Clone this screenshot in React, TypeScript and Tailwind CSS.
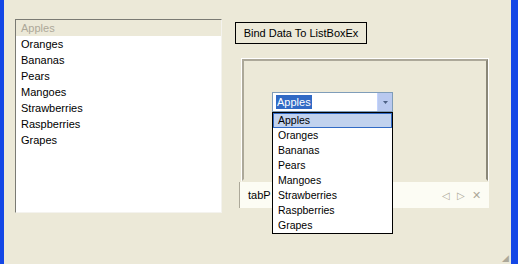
const fruits = [
  "Apples",
  "Oranges",
  "Bananas",
  "Pears",
  "Mangoes",
  "Strawberries",
  "Raspberries",
  "Grapes",
];

const App = () => {
  return (
    <div
      className="relative w-[518px] h-[264px] flex bg-[#ECE9D8] border-l-4 border-l-blue-700 border-r-[7px] border-r-blue-700 overflow-hidden text-[11px] text-black"
      style={{ fontFamily: '"Liberation Sans", Arial, sans-serif' }}
    >
      {/* form body */}
      <div className="flex-1 min-w-0 flex pl-[11px] pt-[19px]">
        {/* ListBoxEx */}
        <div className="shrink-0 w-[207px] h-[194px] bg-white border-t border-l border-[#7A7A73] border-r border-b border-r-[#F4F3EE] border-b-[#F4F3EE]">
          {fruits.map((f, i) => (
            <div
              key={f}
              className={
                i === 0
                  ? "h-[16px] leading-[16px] pl-[5px] bg-[#ECE9D8] text-[#ACA899]"
                  : "h-[16px] leading-[16px] pl-[5px]"
              }
            >
              {f}
            </div>
          ))}
        </div>

        {/* right column */}
        <div className="shrink-0 ml-[13px] pt-[3px] flex flex-col">
          <button className="w-[132px] h-[22px] border border-black bg-[#ECE9D8] text-[11px] leading-[20px]">
            Bind Data To ListBoxEx
          </button>

          {/* tab control */}
          <div className="mt-[14px] ml-[4px] w-[250px] flex flex-col">
            <div className="ml-[2px] w-[248px] h-[124px] border border-t-white border-l-white border-r-white border-b-[#ECE9D8]">
              <div className="w-full h-full border-2 border-t-[#ACA899] border-l-[#ACA899] border-r-[#8A8778] border-b-[#ECE9D8] pl-[28px] pt-[31px]">
                {/* combo box */}
                <div className="w-[121px] h-[20px] flex border border-[#7F9DB9] bg-white">
                  <div className="flex-1 flex items-center pl-[3px]">
                    <span className="bg-[#316AC5] text-white px-[1px] leading-[14px]">
                      Apples
                    </span>
                  </div>
                  <div className="w-[15px] h-full bg-[#B9C9EF] border-l border-[#C3D3FD] flex items-center justify-center">
                    <svg width="5" height="3" viewBox="0 0 5 3">
                      <path d="M0 0h5L2.5 3z" fill="#4D6185" />
                    </svg>
                  </div>
                </div>
              </div>
            </div>
            <div className="h-[26px] bg-[#FCFCF4] flex items-center border-l border-[#ACA899]">
              {/* tab label, its right part lies under the open list */}
              <div className="w-[32px] h-full flex items-center pl-[8px] overflow-hidden whitespace-nowrap">
                tabP
              </div>
              <div className="flex-1" />
              <div className="flex items-center gap-[7px] pr-[8px] text-[#ACA899] text-[10px]">
                <span>◁</span>
                <span>▷</span>
                <span className="text-[11px]">✕</span>
              </div>
            </div>
          </div>
        </div>
      </div>

      {/* desktop showing below the window frame */}
      <div className="absolute -right-[7px] bottom-0 w-[7px] h-[28px] bg-green-800" />

      {/* resize grip */}
      <div className="absolute right-[2px] bottom-[1px] text-[#ACA899] text-[9px] leading-none">
        ◢
      </div>

      {/* dropped-down list, floats over the tab control */}
      <div className="absolute left-[268px] top-[112px] w-[121px] bg-white border border-black text-[10.5px]">
        {fruits.map((f, i) => (
          <div
            key={f}
            className={
              i === 0
                ? "h-[15px] leading-[13px] pl-[4px] bg-[#C1D2EE] border border-[#316AC5]"
                : "h-[15px] leading-[15px] pl-[5px]"
            }
          >
            {f}
          </div>
        ))}
      </div>
    </div>
  );
};

export default App;
